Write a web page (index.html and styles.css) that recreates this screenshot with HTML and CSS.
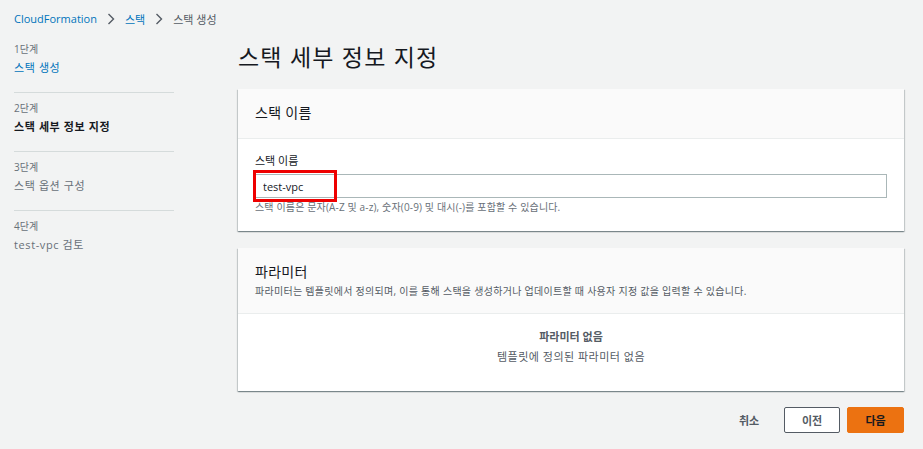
FILE: index.html
```html
<!DOCTYPE html>
<html lang="ko">
<head>
    <meta charset="UTF-8">
    <meta name="viewport" content="width=device-width, initial-scale=1.0">
    <title>스택 생성 - CloudFormation</title>
    <link rel="stylesheet" href="styles.css">
</head>
<body>
    <div class="page">
        <nav class="crumbs">
            <a href="#">CloudFormation</a>
            <svg class="chev" width="8" height="12" viewBox="0 0 8 12"><polyline points="1.5,1 6.5,6 1.5,11" fill="none" stroke="#545b64" stroke-width="1.4"/></svg>
            <a href="#">스택</a>
            <svg class="chev" width="8" height="12" viewBox="0 0 8 12"><polyline points="1.5,1 6.5,6 1.5,11" fill="none" stroke="#545b64" stroke-width="1.4"/></svg>
            <span>스택 생성</span>
        </nav>

        <div class="layout">
            <ul class="steps">
                <li class="step">
                    <div class="step-no">1단계</div>
                    <a class="step-name" href="#">스택 생성</a>
                </li>
                <li class="step">
                    <div class="step-no">2단계</div>
                    <div class="step-name current">스택 세부 정보 지정</div>
                </li>
                <li class="step">
                    <div class="step-no">3단계</div>
                    <div class="step-name">스택 옵션 구성</div>
                </li>
                <li class="step last">
                    <div class="step-no">4단계</div>
                    <div class="step-name">test-vpc 검토</div>
                </li>
            </ul>

            <main class="main">
                <h1>스택 세부 정보 지정</h1>

                <section class="card">
                    <div class="card-head">
                        <h2>스택 이름</h2>
                    </div>
                    <div class="card-body">
                        <label class="field-label" for="stackName">스택 이름</label>
                        <div class="field">
                            <input type="text" id="stackName" value="test-vpc">
                            <div class="mark"></div>
                        </div>
                        <p class="hint">스택 이름은 문자(A-Z 및 a-z), 숫자(0-9) 및 대시(-)를 포함할 수 있습니다.</p>
                    </div>
                </section>

                <section class="card">
                    <div class="card-head">
                        <h2>파라미터</h2>
                        <p class="desc">파라미터는 템플릿에서 정의되며, 이를 통해 스택을 생성하거나 업데이트할 때 사용자 지정 값을 입력할 수 있습니다.</p>
                    </div>
                    <div class="card-body empty">
                        <div class="empty-title">파라미터 없음</div>
                        <div class="empty-text">템플릿에 정의된 파라미터 없음</div>
                    </div>
                </section>

                <div class="actions">
                    <button class="btn link">취소</button>
                    <button class="btn normal">이전</button>
                    <button class="btn primary">다음</button>
                </div>
            </main>
        </div>
    </div>
</body>
</html>
```

FILE: styles.css
```css
body {
    margin: 0;
    background: #f2f3f3;
    font-family: "Open Sans", "Noto Sans CJK KR", sans-serif;
    color: #16191f;
}
a {
    color: #0073bb;
    text-decoration: none;
}
.page {
    padding: 0 19px 0 14px;
}
.crumbs {
    display: flex;
    align-items: center;
    gap: 10px;
    height: 34px;
    padding-top: 3px;
    box-sizing: border-box;
    font-size: 11px;
    color: #545b64;
}
.layout {
    display: flex;
    gap: 64px;
}
.steps {
    list-style: none;
    margin: 0;
    padding: 0;
    width: 160px;
    flex-shrink: 0;
}
.step {
    padding: 8px 0 15px;
    border-bottom: 1px solid #d5dbdb;
}
.step.last {
    border-bottom: none;
}
.step-no {
    font-size: 10px;
    line-height: 15px;
    color: #687078;
}
.step-name {
    display: block;
    margin-top: 2px;
    font-size: 11px;
    line-height: 18px;
    letter-spacing: 0.6px;
    color: #687078;
}
a.step-name {
    color: #0073bb;
}
.step-name.current {
    color: #16191f;
    font-weight: bold;
}
.main {
    flex: 1;
}
h1 {
    margin: 8px 0 17px;
    font-size: 23px;
    line-height: 30px;
    font-weight: normal;
    letter-spacing: 1.2px;
    color: #16191f;
}
.card {
    background: #fff;
    margin-bottom: 17px;
    box-shadow: 0 1px 1px 0 rgba(0, 28, 36, 0.3), 1px 1px 1px 0 rgba(0, 28, 36, 0.15), -1px 1px 1px 0 rgba(0, 28, 36, 0.15);
}
.card-head {
    background: #fafafa;
    border-bottom: 1px solid #eaeded;
    padding: 14px 17px 15px;
}
.card-head h2 {
    margin: 0;
    font-size: 14px;
    line-height: 20px;
    font-weight: normal;
    letter-spacing: 0.3px;
}
.card-head .desc {
    margin: 2px 0 0;
    font-size: 10px;
    line-height: 14px;
    letter-spacing: 0.28px;
    color: #545b64;
}
.card-body {
    padding: 14px 17px 17px;
}
.field-label {
    display: block;
    font-size: 11px;
    line-height: 16px;
    margin-bottom: 5px;
}
.field {
    position: relative;
}
.field input {
    display: block;
    width: 100%;
    box-sizing: border-box;
    height: 24px;
    padding: 0 7px;
    border: 1px solid #aab7b8;
    border-radius: 0;
    font-family: inherit;
    font-size: 11px;
    color: #16191f;
    background: #fff;
}
.mark {
    position: absolute;
    left: -2px;
    top: -4px;
    width: 84px;
    height: 32px;
    box-sizing: border-box;
    border: 3px solid #ee0000;
}
.hint {
    margin: 2px 0 0;
    font-size: 10px;
    line-height: 14px;
    letter-spacing: 0.15px;
    color: #687078;
}
.card-body.empty {
    padding: 15px 17px 26px;
    text-align: center;
}
.empty-title {
    font-size: 11px;
    line-height: 16px;
    font-weight: bold;
    color: #545b64;
}
.empty-text {
    margin-top: 4px;
    font-size: 11px;
    line-height: 16px;
    letter-spacing: 0.5px;
    color: #545b64;
}
.actions {
    display: flex;
    justify-content: flex-end;
    gap: 7px;
    margin-top: -1px;
}
.btn {
    width: 56px;
    height: 26px;
    border: 1px solid transparent;
    border-radius: 2px;
    font-family: inherit;
    font-size: 11px;
    font-weight: bold;
    cursor: pointer;
    background: none;
    color: #545b64;
}
.btn.normal {
    background: #fff;
    border-color: #545b64;
}
.btn.primary {
    width: 57px;
    background: #ec7211;
    border-color: #ec7211;
    color: #16191f;
}
```
